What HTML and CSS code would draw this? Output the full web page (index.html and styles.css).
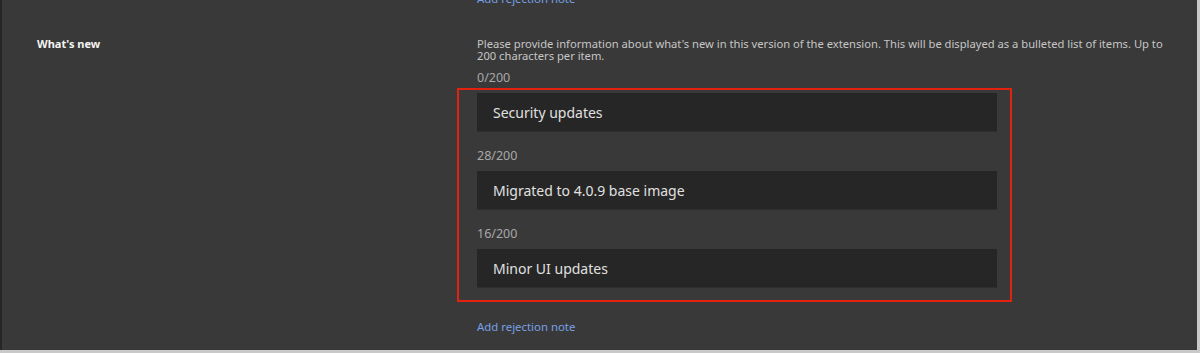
FILE: index.html
```html
<!DOCTYPE html>
<html lang="en">
<head>
<meta charset="utf-8">
<title>What's new</title>
<link rel="stylesheet" href="styles.css">
</head>
<body>
<div class="panel">
  <div class="side">
    <div class="side-label">What's new</div>
  </div>
  <div class="main">
    <a class="link link-top" href="#">Add rejection note</a>
    <p class="desc">Please provide information about what's new in this version of the extension. This will be displayed as a bulleted list of items. Up to 200 characters per item.</p>
    <div class="count count-first">0/200</div>
    <div class="highlight">
      <div class="field">Security updates</div>
      <div class="count">28/200</div>
      <div class="field">Migrated to 4.0.9 base image</div>
      <div class="count">16/200</div>
      <div class="field">Minor UI updates</div>
    </div>
    <a class="link link-bottom" href="#">Add rejection note</a>
  </div>
</div>
</body>
</html>
```

FILE: styles.css
```css
html, body {
  margin: 0;
  padding: 0;
}
body {
  background: #c9c9c9;
  width: 1200px;
  height: 353px;
  overflow: hidden;
  font-family: "Noto Sans", "Open Sans", sans-serif;
}
.panel {
  box-sizing: border-box;
  width: 1197px;
  height: 350px;
  background: #393939;
  border-left: 2px solid #262626;
  display: flex;
  overflow: hidden;
}
.side {
  width: 475px;
  flex: none;
  box-sizing: border-box;
  padding: 37px 0 0 35px;
}
.side-label {
  font-size: 11px;
  line-height: 14px;
  font-weight: 700;
  color: #f4f4f4;
}
.main {
  flex: 1;
  display: flex;
  flex-direction: column;
  align-items: flex-start;
  padding-right: 20px;
}
.link {
  display: block;
  font-size: 11.4px;
  line-height: 16px;
  color: #78a0e6;
  text-decoration: none;
}
.link-top {
  margin-top: -9px;
}
.desc {
  margin: 31px 0 0;
  font-size: 11.2px;
  line-height: 12px;
  color: #c6c6c6;
}
.count {
  font-size: 12.5px;
  line-height: 14px;
  color: #a8a8a8;
  margin: 17px 0 8px;
}
.count-first {
  margin: 9px 0 3px;
}
.highlight {
  box-sizing: border-box;
  width: 555px;
  margin-left: -20px;
  border: 2px solid #e0220f;
  padding: 3px 13px 12px 18px;
}
.field {
  box-sizing: border-box;
  width: 520px;
  height: 39px;
  background: #262626;
  border-bottom: 1px solid #2e2e2e;
  padding-left: 16px;
  display: flex;
  align-items: center;
  font-size: 14px;
  color: #e0e0e0;
}
.link-bottom {
  margin-top: 17px;
}
```
